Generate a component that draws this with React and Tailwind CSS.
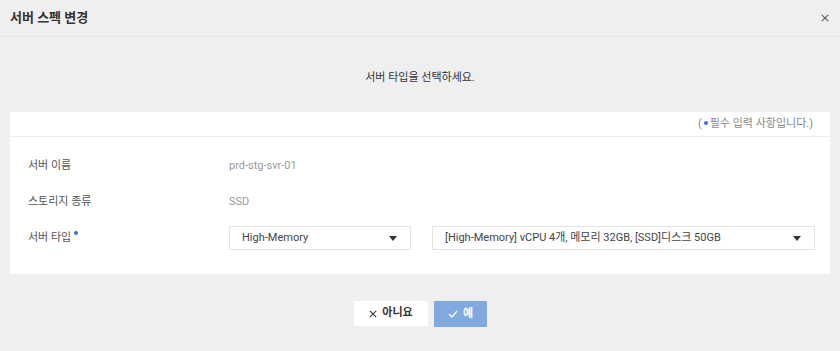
import React, { useState } from "react";

const font = { fontFamily: 'Roboto, "Noto Sans CJK KR", sans-serif' };

const Caret = () => (
  <svg width="8" height="5" viewBox="0 0 8 5" className="fill-[#333]">
    <path d="M0 0h8L4 5z" />
  </svg>
);

const XIcon = ({ size = 9, color = "#555" }) => (
  <svg width={size} height={size} viewBox="0 0 10 10" fill="none" stroke={color} strokeWidth="1.3">
    <path d="M1 1l8 8M9 1l-8 8" />
  </svg>
);

const Dot = ({ className = "" }) => (
  <span className={`inline-block w-[4px] h-[4px] rounded-full bg-[#3b6fd9] ${className}`} />
);

const Select = ({ value, className }) => (
  <div
    className={`h-[24px] flex items-center justify-between pl-[12px] pr-[13px] bg-white border border-[#e2e2e2] text-[11px] text-[#444] ${className}`}
  >
    <span>{value}</span>
    <Caret />
  </div>
);

const Row = ({ label, required, children }) => (
  <div className="flex items-center h-[36px]">
    <div className="w-[219px] shrink-0 pl-[18px] text-[11px] text-[#555] flex items-start">
      {label}
      {required && <Dot className="ml-[3px] mt-[1px]" />}
    </div>
    <div className="flex-1 flex items-center text-[11px] text-[#999]">{children}</div>
  </div>
);

export default function App() {
  const [type] = useState("High-Memory");

  return (
    <div className="w-[840px] h-[351px] bg-[#efefef] flex flex-col" style={font}>
      {/* header */}
      <div className="h-[37px] flex items-center justify-between pl-[10px] pr-[11px] border-b border-[#e6e6e6]">
        <span className="text-[13px] font-bold text-[#333]">서버 스펙 변경</span>
        <XIcon size={8} color="#555" />
      </div>

      <div className="h-[75px] flex items-center justify-center pt-[8px] text-[11px] text-[#333]">
        서버 타입을 선택하세요.
      </div>

      {/* form panel */}
      <div className="mx-[10px] bg-white">
        <div className="h-[25px] flex items-center justify-end pr-[17px] border-b border-[#ebebeb] text-[11px] text-[#888]">
          (<Dot className="mx-[2px] -mt-[3px]" />필수 입력 사항입니다.)
        </div>
        <div className="pt-[11px] pb-[18px]">
          <Row label="서버 이름">prd-stg-svr-01</Row>
          <Row label="스토리지 종류">SSD</Row>
          <Row label="서버 타입" required>
            <Select value={type} className="w-[182px]" />
            <Select
              value="[High-Memory] vCPU 4개, 메모리 32GB, [SSD]디스크 50GB"
              className="w-[383px] ml-[21px]"
            />
          </Row>
        </div>
      </div>

      {/* buttons */}
      <div className="flex justify-center gap-[6px] mt-[27px] pl-[1px]">
        <button className="w-[74px] h-[25px] bg-white text-[11px] font-bold text-[#333] flex items-center justify-center gap-[5px]">
          <XIcon size={8} color="#333" />
          아니요
        </button>
        <button className="w-[53px] h-[26px] bg-[#80a9e0] text-[11px] font-bold text-white flex items-center justify-center gap-[5px] rounded-[1px]">
          <svg width="10" height="8" viewBox="0 0 10 8" className="stroke-white fill-none">
            <path d="M1 4l3 3 5-6" strokeWidth="1.3" />
          </svg>
          예
        </button>
      </div>
    </div>
  );
}
